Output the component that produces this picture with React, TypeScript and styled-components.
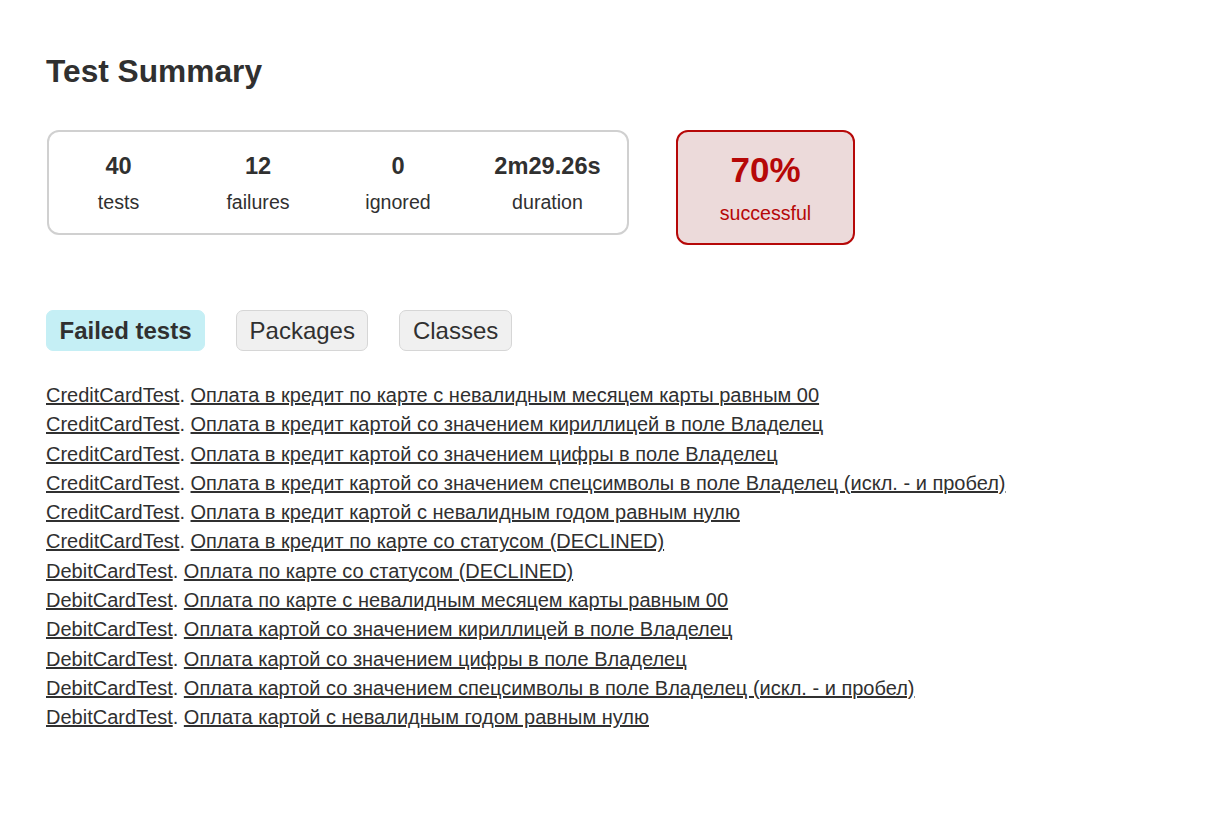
import styled, { createGlobalStyle } from "styled-components";

const GlobalStyle = createGlobalStyle`
  html, body {
    margin: 0;
    padding: 0;
    background: #ffffff;
  }
  body {
    font-family: "Liberation Sans", Arial, sans-serif;
    font-size: 19.5px;
    color: #303030;
  }
`;

const Content = styled.div`
  padding: 53px 46px;
`;

const Title = styled.h1`
  margin: 0;
  font-size: 31.7px;
  font-weight: bold;
  line-height: normal;
  color: #303030;
`;

const Summary = styled.div`
  display: flex;
  align-items: flex-start;
  gap: 47px;
  margin-top: 40px;
`;

const SummaryGroup = styled.div`
  display: flex;
  margin-left: 1px;
  border: 2px solid #d0d0d0;
  border-radius: 12px;
`;

const InfoBox = styled.div<{ $width: number }>`
  width: ${({ $width }) => $width}px;
  padding: 21px 0 19px;
  text-align: center;
`;

const Counter = styled.div`
  font-size: 23.6px;
  font-weight: bold;
  margin-bottom: 11px;
`;

const Label = styled.div`
  font-size: 19.6px;
`;

const SuccessRate = styled.div`
  box-sizing: border-box;
  width: 179px;
  height: 115px;
  padding-top: 18px;
  text-align: center;
  border: 2px solid #b60808;
  border-radius: 12px;
  background-color: #ecdada;
  color: #b60808;
`;

const Percent = styled.div`
  font-size: 35px;
  font-weight: bold;
  margin-bottom: 12px;
`;

const Tabs = styled.div`
  display: flex;
  gap: 31px;
  margin-top: 65px;
`;

const TabButton = styled.button<{ $active?: boolean }>`
  font-family: "Liberation Sans", Arial, sans-serif;
  font-size: 24px;
  font-weight: ${({ $active }) => ($active ? "bold" : "normal")};
  line-height: 27px;
  padding: 6px 12.5px;
  color: #303030;
  background-color: ${({ $active }) => ($active ? "#c5eff5" : "#f0f0f0")};
  border: 1px solid ${({ $active }) => ($active ? "#c5eff5" : "#d6d6d6")};
  border-radius: 7px;
  cursor: pointer;
`;

const LinkList = styled.ul`
  list-style: none;
  margin: 33px 0 0;
  padding: 0;
`;

const Item = styled.li`
  font-size: 20px;
  line-height: 23.3px;
  margin-bottom: 6px;
  white-space: nowrap;
`;

const Link = styled.a`
  color: #303030;
  text-decoration: underline;
`;

const failed: [string, string][] = [
  ["CreditCardTest", "Оплата в кредит по карте с невалидным месяцем карты равным 00"],
  ["CreditCardTest", "Оплата в кредит картой со значением кириллицей в поле Владелец"],
  ["CreditCardTest", "Оплата в кредит картой со значением цифры в поле Владелец"],
  ["CreditCardTest", "Оплата в кредит картой со значением спецсимволы в поле Владелец (искл. - и пробел)"],
  ["CreditCardTest", "Оплата в кредит картой с невалидным годом равным нулю"],
  ["CreditCardTest", "Оплата в кредит по карте со статусом (DECLINED)"],
  ["DebitCardTest", "Оплата по карте со статусом (DECLINED)"],
  ["DebitCardTest", "Оплата по карте с невалидным месяцем карты равным 00"],
  ["DebitCardTest", "Оплата картой со значением кириллицей в поле Владелец"],
  ["DebitCardTest", "Оплата картой со значением цифры в поле Владелец"],
  ["DebitCardTest", "Оплата картой со значением спецсимволы в поле Владелец (искл. - и пробел)"],
  ["DebitCardTest", "Оплата картой с невалидным годом равным нулю"],
];

const counters = [
  { value: "40", label: "tests", width: 139 },
  { value: "12", label: "failures", width: 140 },
  { value: "0", label: "ignored", width: 140 },
  { value: "2m29.26s", label: "duration", width: 159 },
];

export default function App() {
  return (
    <>
      <GlobalStyle />
      <Content>
        <Title>Test Summary</Title>
        <Summary>
          <SummaryGroup>
            {counters.map((c) => (
              <InfoBox key={c.label} $width={c.width}>
                <Counter>{c.value}</Counter>
                <Label>{c.label}</Label>
              </InfoBox>
            ))}
          </SummaryGroup>
          <SuccessRate>
            <Percent>70%</Percent>
            <Label>successful</Label>
          </SuccessRate>
        </Summary>
        <Tabs>
          <TabButton $active>Failed tests</TabButton>
          <TabButton>Packages</TabButton>
          <TabButton>Classes</TabButton>
        </Tabs>
        <LinkList>
          {failed.map(([cls, name], i) => (
            <Item key={i}>
              <Link href="#">{cls}</Link>. <Link href="#">{name}</Link>
            </Item>
          ))}
        </LinkList>
      </Content>
    </>
  );
}
